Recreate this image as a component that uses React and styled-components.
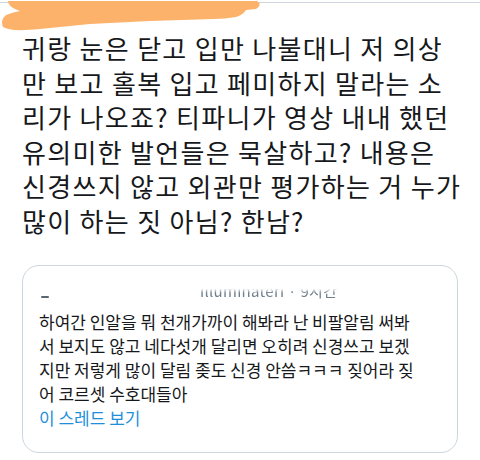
import React from "react";
import styled, { createGlobalStyle } from "styled-components";

const Global = createGlobalStyle`
  html, body { margin: 0; padding: 0; background: #ffffff; }
  body { font-family: "Noto Sans CJK KR", "Noto Sans", sans-serif; }
`;

const Page = styled.div`
  position: relative;
  width: 480px;
  height: 460px;
  overflow: hidden;
  background: #ffffff;
`;

const TopRule = styled.div`
  margin-top: 2px;
  height: 1px;
  background: #cdd5df;
`;

const Scribble = styled.svg`
  position: absolute;
  left: 0;
  top: 0;
  width: 270px;
  height: 34px;
`;

const Body = styled.div`
  padding: 28px 0 0 22px;
`;

const TweetText = styled.p`
  margin: 0;
  font-family: "Noto Sans CJK KR", sans-serif;
  font-size: 26px;
  line-height: 34.5px;
  letter-spacing: 1.3px;
  color: #16181b;
  white-space: pre-line;
`;

const Quote = styled.div`
  margin: 27px 22px 0 22px;
  height: 188px;
  box-sizing: border-box;
  border: 1px solid #ccd6dd;
  border-radius: 17px;
  padding: 15px 16px 0 16px;
  display: flex;
  flex-direction: column;
`;

const QuoteHead = styled.div`
  display: flex;
  align-items: flex-end;
  height: 20px;
  -webkit-mask-image: linear-gradient(to bottom, transparent 0%, transparent 38%, #000 60%);
  mask-image: linear-gradient(to bottom, transparent 0%, transparent 38%, #000 60%);
`;

const Dash = styled.span`
  width: 8px;
  height: 2px;
  margin: 0 0 3px 2px;
  border-radius: 1px;
  background: #5b6770;
`;

const Handle = styled.span`
  margin-left: 151px;
  font-family: "Noto Sans CJK KR", sans-serif;
  font-size: 15px;
  line-height: 20px;
  color: #6f7f8c;
  letter-spacing: 0.3px;
`;

const QuoteText = styled.p`
  margin: 9px 0 0 0;
  font-family: "Noto Sans CJK KR", sans-serif;
  font-size: 17px;
  line-height: 24px;
  color: #16181b;
  white-space: pre-line;
`;

const ThreadLink = styled.a`
  display: block;
  margin-top: 0;
  font-family: "Noto Sans CJK KR", sans-serif;
  font-size: 17px;
  line-height: 24px;
  color: #1f8fdc;
  text-decoration: none;
`;

export default function App() {
  return (
    <Page>
      <Global />
      <TopRule />
      <Scribble viewBox="0 0 270 34">
        <path
          d="M8 1 L257 1 Q263 4 256 9 L246 10 Q243 15 236 17 Q225 19 214 19 L150 21 L90 24 L40 29 Q10 32 3 27 Q0 20 6 15 Q14 12 20 11 Q8 7 8 1 Z"
          fill="#fdb26b"
        />
      </Scribble>
      <Body>
        <TweetText>
          {"귀랑 눈은 닫고 입만 나불대니 저 의상\n만 보고 홀복 입고 페미하지 말라는 소\n리가 나오죠? 티파니가 영상 내내 했던\n유의미한 발언들은 묵살하고? 내용은\n신경쓰지 않고 외관만 평가하는 거 누가\n많이 하는 짓 아님? 한남?"}
        </TweetText>
      </Body>
      <Quote>
        <QuoteHead>
          <Dash />
          <Handle>illuminateri · 9시간</Handle>
        </QuoteHead>
        <QuoteText>
          {"하여간 인알을 뭐 천개가까이 해봐라 난 비팔알림 써봐\n서 보지도 않고 네다섯개 달리면 오히려 신경쓰고 보겠\n지만 저렇게 많이 달림 좆도 신경 안씀ㅋㅋㅋ 짖어라 짖\n어 코르셋 수호대들아"}
        </QuoteText>
        <ThreadLink href="#">이 스레드 보기</ThreadLink>
      </Quote>
    </Page>
  );
}
